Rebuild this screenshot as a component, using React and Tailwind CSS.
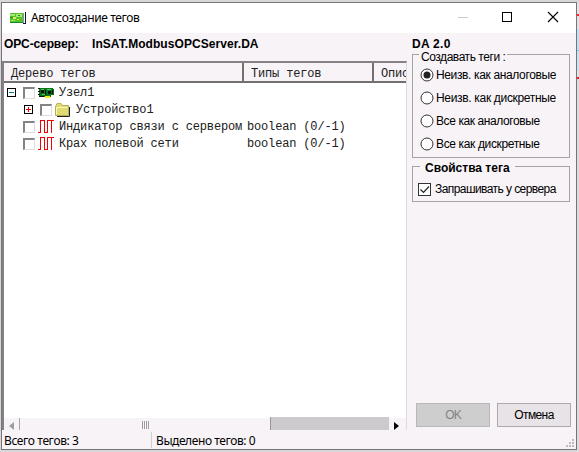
import React from "react";

const ROWS = [
  { label: "Узел1", icon: "board", toggle: "minus", type: "" },
  { label: "Устройство1", icon: "folder", toggle: "plus", type: "", indent: true },
  { label: "Индикатор связи с сервером", icon: "pulse", type: "boolean (0/-1)" },
  { label: "Крах полевой сети", icon: "pulse", type: "boolean (0/-1)" },
];

const MODES = [
  { label: "Неизв. как аналоговые", checked: true, cls: "tracking-[-0.36px]" },
  { label: "Неизв. как дискретные", cls: "tracking-[-0.32px]" },
  { label: "Все как аналоговые", cls: "tracking-[-0.4px]" },
  { label: "Все как дискретные", cls: "tracking-[-0.36px]" },
];

function Board() {
  return (
    <svg width="16" height="12" viewBox="0 0 16 12" shapeRendering="crispEdges">
      <path d="M1 1h14v1h1v6h-3v2H1z" fill="#08741c" />
      <path d="M0 1h2v1H0zM0 4h2v1H0zM0 7h2v1H0zM1 9h5v1H1zM7 3h1v5H7z" fill="#111" />
      <path d="M3 3h3v3H3zM10 4h3v3h-3zM14 3h1v4h-1z" fill="#111" />
      <path d="M3 2h3v1H3zM9 2h4v1H9zM4 7h3v1H4z" fill="#48d048" />
      <path d="M7 9h5v2H7z" fill="#f4ed18" />
    </svg>
  );
}

function Folder() {
  return (
    <svg width="16" height="14" viewBox="0 0 16 14">
      <path d="M2 13.5h12.5V4" fill="none" stroke="#222" />
      <path d="M.5 12.5v-9l1.5-3h4l1.5 2h6v10z" fill="#e0da72" stroke="#b5ae5c" />
      <path d="M1.5 11.5V4.5h11" fill="none" stroke="#fbf7b4" />
    </svg>
  );
}

function Pulse() {
  return (
    <svg width="16" height="13" viewBox="0 0 16 13" shapeRendering="crispEdges">
      <path d="M0 12.5h2.5V.5h4v12h3V.5H16M13.5.5V13" fill="none" stroke="#f00000" />
    </svg>
  );
}

function AppIcon() {
  return (
    <svg width="17" height="13" viewBox="0 0 17 13" shapeRendering="crispEdges">
      <path d="M0 1h13v10H0z" fill="#55c42c" />
      <path d="M0 2h5v2H0zM6 2h6v3H6zM1 8h4v1H1z" fill="#a3e870" />
      <path d="M0 5h3v1H0zM8 3h2v1H8zM0 10h13v1H0z" fill="#1f8a24" />
      <path d="M3 5h3v2H3zM7 7h2v1H7z" fill="#e9e65c" />
      <path d="M13 1h1v11h-1z" fill="#8a94a8" />
      <path d="M15 0h1v12h-1zM13 11h3v1h-3z" fill="#14182c" />
    </svg>
  );
}

function Toggle({ kind }) {
  return (
    <svg width="9" height="9" viewBox="0 0 9 9" shapeRendering="crispEdges">
      <rect x=".5" y=".5" width="8" height="8" fill="#fff" stroke="#000" />
      <path d="M2 4.5h5" stroke={kind === "plus" ? "#e00000" : "#008080"} />
      {kind === "plus" && <path d="M4.5 2v5" stroke="#e00000" />}
    </svg>
  );
}

const ICONS = { board: Board, folder: Folder, pulse: Pulse };

function TreeRow({ row }) {
  const Icon = ICONS[row.icon];
  return (
    <div className="flex h-[17px] items-center">
      <div className={`flex w-[242px] shrink-0 items-center ${row.indent ? "pl-[19px]" : "pl-[2px]"}`}>
        <span className="mr-[7px] flex w-[9px] shrink-0">{row.toggle && <Toggle kind={row.toggle} />}</span>
        <span className="size-3 shrink-0 border-t-2 border-r border-b border-l-2 border-t-[#858385] border-r-[#dedcde] border-b-[#dedcde] border-l-[#858385] bg-white" />
        <span className="ml-[3px] flex h-[17px] w-[16px] shrink-0 items-center"><Icon /></span>
        <span className="ml-[5px] shrink-0">{row.label}</span>
      </div>
      <span>{row.type}</span>
    </div>
  );
}

function HeaderCell({ className, children }) {
  return (
    <div className={`h-[20px] shrink-0 overflow-hidden border-b-2 border-[#737073] bg-[#f7f3f7] leading-[22px] ${className}`}>
      {children}
    </div>
  );
}

function ScrollBar() {
  return (
    <div className="flex h-[12px] shrink-0 bg-[#f7f3f7]">
      <div className="flex w-[16px] items-center border-r border-[#aaa7aa] pl-[5px]">
        <svg width="5" height="8" viewBox="0 0 5 8" className="mt-[3px]"><path d="M5 0v8L0 4z" fill="#a09da0" /></svg>
      </div>
      <div className="flex w-[250px] justify-center gap-px pt-[3px]">
        <span className="h-[8px] w-px bg-[#a09da0]" />
        <span className="h-[8px] w-px bg-[#a09da0]" />
        <span className="h-[8px] w-px bg-[#a09da0]" />
        <span className="h-[8px] w-px bg-[#a09da0]" />
      </div>
      <div className="-mt-px w-[119px] border-l border-[#99979a] bg-[#cdcacd]" />
      <div className="flex flex-1 items-center pl-[5px]">
        <svg width="5" height="8" viewBox="0 0 5 8" className="mt-[3px]"><path d="M0 0v8l5-4z" fill="#000" /></svg>
      </div>
    </div>
  );
}

function SizeGrip() {
  return (
    <svg width="8" height="8" viewBox="0 0 8 8" shapeRendering="crispEdges">
      <path d="M6 0h2v2H6zM3 3h2v2H3zM6 3h2v2H6zM0 6h2v2H0zM3 6h2v2H3zM6 6h2v2H6z" fill="#bdbabd" />
    </svg>
  );
}

export default function App() {
  return (
    <div className="flex h-[452px] w-[579px] overflow-hidden bg-[#d9d7d9] pt-[2px] text-black">
      <div className="ml-px flex h-[448px] w-[576px] shrink-0 flex-col border border-[#777477] bg-[#f7f3f7]">
        <div className="flex h-[30px] shrink-0 items-center bg-white pl-[8px]">
          <AppIcon />
          <span className="ml-[4px] flex-1 font-['Noto_Sans',sans-serif] text-[12px] tracking-[-0.38px] whitespace-nowrap">Автосоздание тегов</span>
          <svg width="110" height="12" viewBox="0 0 110 12" className="mr-[10px] -mt-[2px]">
            <path d="M2 6.5h10" stroke="#cbcbcb" />
            <rect x="46.5" y="1.5" width="9" height="9" fill="none" stroke="#000" />
            <path d="M92 1l10 10M102 1L92 11" stroke="#000" strokeWidth="1.1" />
          </svg>
        </div>

        <div className="flex min-h-0 flex-1">
          <div className="flex w-[405px] shrink-0 flex-col">
            <div className="flex h-[28px] shrink-0 pt-[4px] pl-[2px] font-['Liberation_Sans',sans-serif] text-[12px] leading-[15px] font-bold whitespace-nowrap">
              <span className="w-[88px] tracking-[-0.12px]">OPC-сервер:</span>
              <span className="tracking-[0.06px]">InSAT.ModbusOPCServer.DA</span>
            </div>
            <div className="flex min-h-0 flex-1 flex-col border-t-2 border-r border-l-2 border-t-[#858285] border-r-[#dedbde] border-l-[#858285] bg-white font-['Liberation_Mono','Courier_New',monospace] text-[12px] tracking-[-0.16px] whitespace-nowrap text-[#202020]">
              <div className="flex shrink-0 overflow-hidden">
                <HeaderCell className="w-[240px] border-r-2 pl-[7px]">Дерево тегов</HeaderCell>
                <HeaderCell className="w-[130px] border-r-2 pl-[7px]">Типы тегов</HeaderCell>
                <HeaderCell className="w-[32px] pl-[7px]">Описание</HeaderCell>
              </div>
              <div className="min-h-0 flex-1 overflow-hidden pt-px pl-[1px]">
                {ROWS.map((row) => <TreeRow key={row.label} row={row} />)}
              </div>
              <ScrollBar />
            </div>
          </div>

          <div className="flex flex-1 flex-col pt-[4px] pl-[5px] font-['Liberation_Sans',sans-serif] text-[12px] whitespace-nowrap">
            <div className="h-[17px] shrink-0 leading-[14px] font-bold tracking-[0.3px]">DA 2.0</div>
            <fieldset className="relative h-[104px] w-[158px] shrink-0 border border-[#a5a2a5] pt-[8px] pl-[7px]">
              <span className="absolute -top-[5px] left-[6px] h-[13px] bg-[#f7f3f7] px-[2px] leading-[14px] tracking-[-0.45px]">Создавать теги :</span>
              {MODES.map((mode) => (
                <label key={mode.label} className="flex h-[23px] items-center">
                  <svg width="14" height="14" viewBox="0 0 14 14">
                    <circle cx="7" cy="7" r="6" fill="#fff" stroke="#333" strokeWidth="1" />
                    {mode.checked && <circle cx="7" cy="7" r="3.5" fill="#222" />}
                  </svg>
                  <span className={`ml-[2px] ${mode.cls}`}>{mode.label}</span>
                </label>
              ))}
            </fieldset>
            <fieldset className="relative mt-[8px] h-[36px] w-[158px] shrink-0 border border-[#a5a2a5] pt-[12px] pl-[5px]">
              <span className="absolute -top-[7px] left-[7px] h-[14px] bg-[#f7f3f7] px-[5px] leading-[16px] font-bold">Свойства тега</span>
              <label className="flex h-[20px] items-center">
                <svg width="13" height="13" viewBox="0 0 13 13">
                  <rect x=".5" y=".5" width="12" height="12" fill="#fff" stroke="#333" />
                  <path d="M2.5 6.5l3 3 5.5-6" fill="none" stroke="#222" strokeWidth="1.2" />
                </svg>
                <span className="ml-[4px] tracking-[-0.57px]">Запрашивать у сервера</span>
              </label>
            </fieldset>
            <div className="mt-auto mb-[3px] flex gap-[7px] pl-[4px]">
              <button className="h-[24px] w-[74px] border border-[#b9b9b9] bg-[#cecece] tracking-[-0.8px] text-[#848284]">OK</button>
              <button className="h-[24px] w-[74px] border border-[#adaaad] bg-[#e7e3e7] tracking-[-0.6px]">Отмена</button>
            </div>
          </div>
        </div>

        <div className="flex h-[19px] shrink-0 items-center pl-[2px] font-['Noto_Sans',sans-serif] text-[12px] leading-[18px] whitespace-nowrap">
          <span className="h-[16px] w-[148px] border-r border-[#d2cfd2] leading-[18px] tracking-[-0.38px]">Всего тегов: 3</span>
          <span className="ml-[4px] h-[16px] flex-1 leading-[18px] tracking-[-0.42px]">Выделено тегов: 0</span>
          <span className="mt-[7px] mr-[2px]"><SizeGrip /></span>
        </div>
      </div>
      <div className="flex flex-1 flex-col">
        <div className="h-[12px] bg-[#e4e2e4]" />
        <div className="h-[2px] bg-[#ff2030]" />
        <div className="h-[13px] bg-[#e4e2e4]" />
        <div className="h-[21px] bg-[#c4dff2]" />
        <div className="h-px bg-[#88c8ea]" />
        <div className="h-[20px] bg-[#cbe2f2]" />
        <div className="h-[6px] bg-[#e4e2e4]" />
        <div className="h-[2px] bg-[#e0203c]" />
        <div className="flex-1 bg-[#dddbdd]" />
      </div>
    </div>
  );
}
